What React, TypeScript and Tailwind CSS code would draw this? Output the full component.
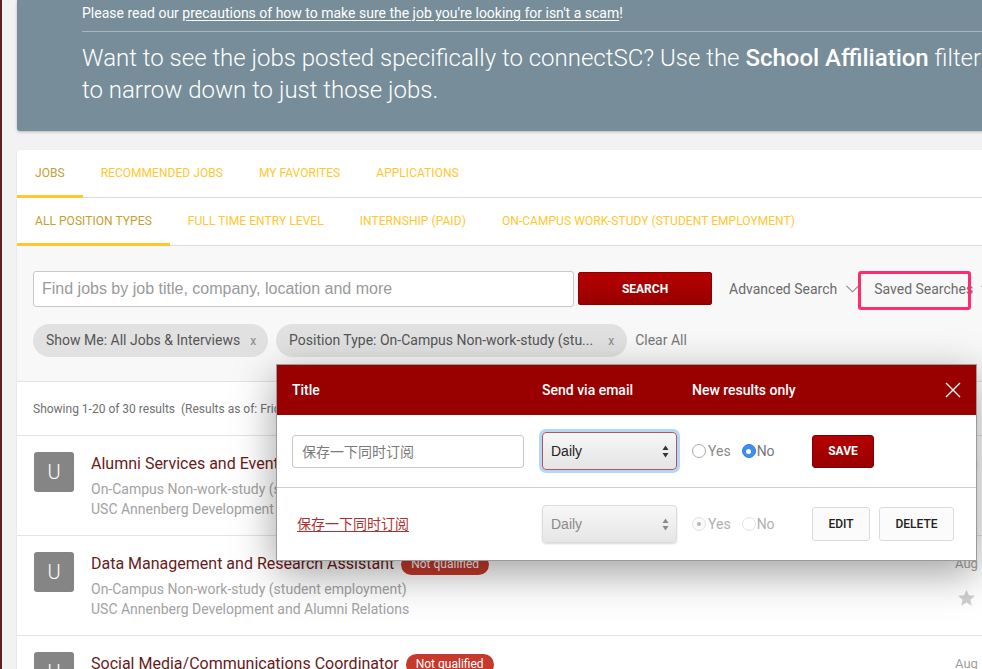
import React from "react";

const Chevron = ({ className = "" }: { className?: string }) => (
  <svg className={className} width="13" height="8" viewBox="0 0 13 8" fill="none">
    <path d="M0.5 0.8 L6.5 6.8 L12.5 0.8" stroke="#888" strokeWidth="1.1" />
  </svg>
);

const SelectArrows = ({ color }: { color: string }) => (
  <svg width="7" height="13" viewBox="0 0 7 13">
    <path d="M3.5 0.5 L6.5 5 L0.5 5 Z" fill={color} />
    <path d="M3.5 12.5 L6.5 8 L0.5 8 Z" fill={color} />
  </svg>
);

const Radio = ({ checked, disabled }: { checked?: boolean; disabled?: boolean }) => {
  if (checked && !disabled)
    return (
      <span className="flex h-[14px] w-[14px] shrink-0 items-center justify-center rounded-full border border-[#2f7fe0] bg-[#3b8ef3]">
        <span className="block h-[5px] w-[5px] rounded-full bg-white" />
      </span>
    );
  if (checked && disabled)
    return (
      <span className="flex h-[14px] w-[14px] shrink-0 items-center justify-center rounded-full border border-[#e2e2e2] bg-[#fafafa]">
        <span className="block h-[4px] w-[4px] rounded-full bg-[#b5b5b5]" />
      </span>
    );
  return (
    <span
      className={
        disabled
          ? "block h-[14px] w-[14px] shrink-0 rounded-full border border-[#e4e4e4] bg-white"
          : "block h-[14px] w-[14px] shrink-0 rounded-full border border-[#a9a9a9] bg-white"
      }
    />
  );
};

const Avatar = () => (
  <div className="flex h-[40px] w-[40px] shrink-0 items-center justify-center rounded-[3px] bg-[#858585] text-[20px] font-light text-white">
    U
  </div>
);

const Badge = () => (
  <span className="ml-[7px] inline-flex h-[21px] items-center rounded-full bg-[#c6392b] px-[10px] text-[12px] leading-none text-white">
    Not qualified
  </span>
);

const Star = () => (
  <svg width="19" height="18" viewBox="0 0 24 23">
    <path
      d="M12 0.8 L15.1 8 L22.9 8.7 L17 13.8 L18.8 21.5 L12 17.4 L5.2 21.5 L7 13.8 L1.1 8.7 L8.9 8 Z"
      fill="#cfcfcf"
    />
  </svg>
);

export default function App() {
  return (
    <div className="relative h-[669px] w-[982px] overflow-hidden border-l-2 border-[#5a2323] bg-[#f2f2f2] font-['Roboto',sans-serif]">
      <div className="ml-[15px] w-[1000px]">
        {/* Banner */}
        <div className="rounded-b-[3px] bg-[#778d99] pl-[65px] pt-[3px] pb-[25px] text-white shadow-[0_1px_3px_rgba(0,0,0,0.25)]">
          <div className="whitespace-nowrap text-[14px] leading-[20px]">
            Please read our{" "}
            <span className="underline underline-offset-2">
              precautions of how to make sure the job you're looking for isn't a scam
            </span>
            !
          </div>
          <div className="mt-[8px] h-px bg-[#a7b6be]" />
          <div className="mt-[10px] whitespace-nowrap text-[24px] font-light leading-[32px]">
            Want to see the jobs posted specifically to connectSC? Use the{" "}
            <span className="font-medium">School Affiliation</span> filter
            <br />
            to narrow down to just those jobs.
          </div>
        </div>

        {/* Main card */}
        <div className="mt-[19px] rounded-t-[3px] bg-white shadow-[0_1px_2px_rgba(0,0,0,0.12)]">
          <div className="flex h-[48px] items-stretch border-b border-[#dcdcdc] text-[12px] uppercase tracking-[0.04px]">
            <div className="-mb-px flex items-center border-b-[3px] border-[#ffc72c] px-[18px] pt-[1px] text-[#c3a12e]">
              Jobs
            </div>
            <div className="flex items-center px-[18px] pb-[2px] text-[#ffc72c]">Recommended Jobs</div>
            <div className="flex items-center px-[18px] pb-[2px] text-[#ffc72c]">My Favorites</div>
            <div className="flex items-center px-[18px] pb-[2px] text-[#ffc72c]">Applications</div>
          </div>
          <div className="flex h-[48px] items-stretch border-b border-[#dcdcdc] text-[12px] uppercase tracking-[0.06px]">
            <div className="-mb-px flex items-center border-b-[3px] border-[#ffc72c] px-[18px] pt-[1px] text-[#c3a12e]">
              All Position Types
            </div>
            <div className="flex items-center px-[18px] pb-[2px] text-[#ffc72c]">Full Time Entry Level</div>
            <div className="flex items-center px-[18px] pb-[2px] text-[#ffc72c]">Internship (Paid)</div>
            <div className="flex items-center px-[18px] pb-[2px] text-[#ffc72c]">
              On-Campus Work-Study (Student Employment)
            </div>
          </div>

          {/* Search area */}
          <div className="border-b border-[#e2e2e2] bg-[#f8f8f8] px-[16px] pt-[25px] pb-[24px]">
            <div className="flex items-start">
              <div className="flex h-[36px] w-[541px] items-center rounded-[3px] border border-[#c8c8c8] bg-white px-[8px] font-['Liberation_Sans',Arial,sans-serif] text-[16px] text-[#9a9a9a]">
                Find jobs by job title, company, location and more
              </div>
              <div className="ml-[4px] mt-[1px] flex h-[33px] w-[134px] items-center justify-center rounded-[2px] border border-[#8a0000] bg-gradient-to-b from-[#b70000] to-[#990000] text-[12px] font-bold text-white">
                SEARCH
              </div>
              <div className="ml-[17px] flex h-[36px] items-center text-[14px] text-[#6b6b6b]">
                Advanced Search
                <Chevron className="ml-[9px]" />
              </div>
              <div className="relative -ml-[1px] flex h-[39px] items-center whitespace-nowrap pl-[16px] pb-[3px] text-[14px] text-[#6b6b6b]">
                Saved Searches
                <Chevron className="ml-[8px]" />
                <div className="absolute left-0 top-0 h-[39px] w-[113px] rounded-[3px] border-[3px] border-[#ff2b6c]" />
              </div>
            </div>
            <div className="mt-[14px] flex items-center gap-[8px] text-[14px] text-[#555]">
              <div className="flex h-[33px] items-center rounded-full bg-[#e1e1e1] pl-[13px] pr-[12px]">
                Show Me: All Jobs &amp; Interviews
                <span className="ml-[10px] text-[12px] text-[#888]">x</span>
              </div>
              <div className="flex h-[33px] items-center rounded-full bg-[#e1e1e1] pl-[13px] pr-[13px]">
                Position Type: On-Campus Non-work-study (stu...
                <span className="ml-[15px] text-[12px] text-[#888]">x</span>
              </div>
              <div className="text-[#777]">Clear All</div>
            </div>
          </div>

          <div className="flex h-[54px] items-center whitespace-pre border-b border-[#e3e3e3] px-[16px] text-[12px] text-[#707070]">
            Showing 1-20 of 30 results  (Results as of: Friday, August 10, 2018 9:06 AM)
          </div>

          {/* Job rows */}
          {[
            { title: "Alumni Services and Events Assistant", badge: false },
            { title: "Data Management and Research Assistant", badge: true },
            { title: "Social Media/Communications Coordinator", badge: true },
          ].map((j, i) => (
            <div key={i} className="flex h-[100px] gap-[17px] border-b border-[#e3e3e3] px-[17px] pt-[16px]">
              <Avatar />
              <div className="flex-1">
                <div className="flex items-center text-[16px] leading-[24px] text-[#6a1a1a]">
                  {j.title}
                  {j.badge && <Badge />}
                </div>
                <div className="mt-[3px] text-[14px] leading-[20px] text-[#a2a2a2]">
                  On-Campus Non-work-study (student employment)
                </div>
                <div className="text-[14px] leading-[20px] text-[#a2a2a2]">
                  USC Annenberg Development and Alumni Relations
                </div>
              </div>
              <div className="w-[45px] text-[13px] leading-[24px] text-[#a0a0a0]">
                <div>Aug 10</div>
                <div className="mt-[13px] ml-[2px]">
                  <Star />
                </div>
              </div>
            </div>
          ))}
        </div>
      </div>

      {/* Saved searches modal */}
      <div className="absolute left-[274px] top-[364px] w-[701px] border border-[#9a9a9a] bg-white shadow-[0_12px_40px_rgba(0,0,0,0.38)]">
        <div className="flex h-[50px] items-center bg-[#990000] text-[14px] font-medium text-white">
          <div className="w-[265px] pl-[15px]">Title</div>
          <div className="w-[150px]">Send via email</div>
          <div className="flex-1">New results only</div>
          <svg className="mr-[15px]" width="16" height="16" viewBox="0 0 16 16">
            <path d="M1 1 L15 15 M15 1 L1 15" stroke="white" strokeWidth="1.4" />
          </svg>
        </div>
        <div className="flex h-[73px] items-center border-b border-[#cfcfcf]">
          <div className="w-[265px] pl-[15px]">
            <div className="flex h-[33px] w-[232px] items-center rounded-[3px] border border-[#c9c9c9] px-[9px] font-['Noto_Sans_CJK_SC',sans-serif] text-[14px] text-[#7a7a7a]">
              保存一下同时订阅
            </div>
          </div>
          <div className="w-[150px]">
            <div className="flex h-[38px] w-[135px] items-center justify-between rounded-[4px] border border-[#b45656] bg-gradient-to-b from-[#f7f7f7] to-[#e4e4e4] pl-[8px] pr-[7px] font-['Liberation_Sans',Arial,sans-serif] text-[14px] text-[#222] shadow-[0_0_0_3px_#b3d7fb]">
              Daily
              <SelectArrows color="#333" />
            </div>
          </div>
          <div className="flex w-[120px] items-center text-[14px] text-[#8a8a8a]">
            <Radio />
            <span className="ml-[2px]">Yes</span>
            <span className="ml-[11px] flex">
              <Radio checked />
            </span>
            <span className="ml-[1px] text-[#777]">No</span>
          </div>
          <div className="flex h-[33px] w-[62px] items-center justify-center rounded-[3px] border border-[#7d0000] bg-gradient-to-b from-[#b50000] to-[#990000] text-[12px] font-bold text-white">
            SAVE
          </div>
        </div>
        <div className="flex h-[72px] items-center">
          <div className="w-[265px] pl-[20px]">
            <span className="font-['Noto_Sans_CJK_SC',sans-serif] text-[14px] text-[#b03030] underline underline-offset-2">
              保存一下同时订阅
            </span>
          </div>
          <div className="w-[150px]">
            <div className="flex h-[38px] w-[135px] items-center justify-between rounded-[4px] border border-[#dcdcdc] bg-gradient-to-b from-[#f7f7f7] to-[#e6e6e6] pl-[8px] pr-[7px] font-['Liberation_Sans',Arial,sans-serif] text-[14px] text-[#8a8a8a] shadow-[0_1px_2px_rgba(0,0,0,0.15)]">
              Daily
              <SelectArrows color="#8a8a8a" />
            </div>
          </div>
          <div className="flex w-[120px] items-center text-[14px] text-[#b0b0b0]">
            <Radio checked disabled />
            <span className="ml-[2px]">Yes</span>
            <span className="ml-[11px] flex">
              <Radio disabled />
            </span>
            <span className="ml-[1px]">No</span>
          </div>
          <div className="flex h-[34px] w-[58px] items-center justify-center rounded-[3px] border border-[#dcdcdc] bg-[#fbfbfb] text-[12px] font-medium text-[#222]">
            EDIT
          </div>
          <div className="ml-[9px] flex h-[34px] w-[75px] items-center justify-center rounded-[3px] border border-[#dcdcdc] bg-[#fbfbfb] text-[12px] font-medium text-[#222]">
            DELETE
          </div>
        </div>
      </div>
    </div>
  );
}
